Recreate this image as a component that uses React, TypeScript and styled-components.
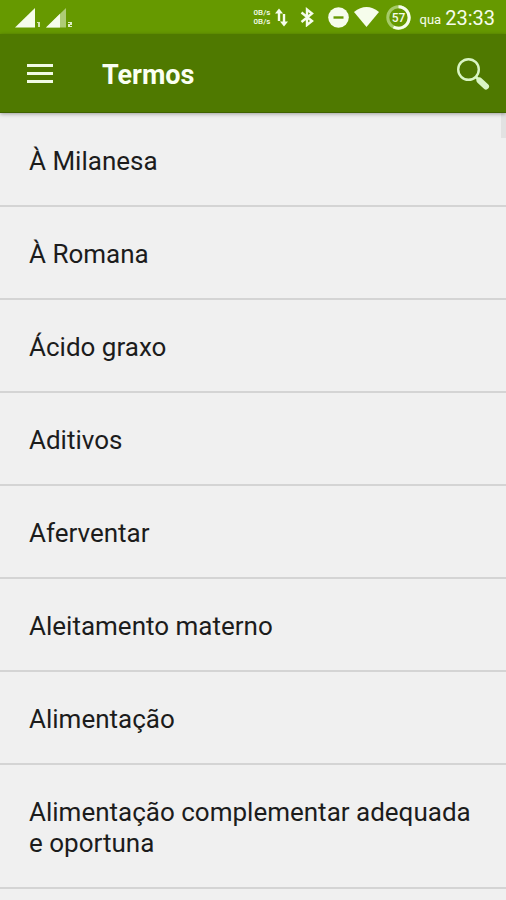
import React from "react";
import styled, { createGlobalStyle } from "styled-components";

const GlobalStyle = createGlobalStyle`
  *, *::before, *::after { box-sizing: border-box; }
  html, body, #root { height: 100%; }
  body {
    margin: 0;
    background: #f0f0f0;
    font-family: Roboto, "Noto Sans", sans-serif;
  }
`;

const Screen = styled.div`
  display: flex;
  flex-direction: column;
  height: 100%;
  overflow: hidden;
`;

const StatusBar = styled.div`
  display: flex;
  align-items: center;
  flex: none;
  height: 34px;
  padding: 0 11px 0 14px;
  background: #669900;
  color: #f6fdec;
`;

const SignalGroup = styled.div`
  display: flex;
  flex: 1;
`;

const StatusIcon = styled.svg<{ $gap?: number }>`
  display: block;
  flex: none;
  margin-right: ${({ $gap = 0 }) => $gap}px;
`;

const Speed = styled.div`
  display: flex;
  flex-direction: column;
  width: 19px;
  margin-right: 2px;
  font-size: 8px;
  line-height: 9px;
  font-weight: 500;
`;

const Weekday = styled.span`
  margin: 6px 4px 0 0;
  font-size: 13px;
  line-height: 20px;
`;

const Clock = styled.time`
  font-size: 20px;
  line-height: 24px;
  margin-top: 2px;
`;

const AppBar = styled.header`
  position: relative;
  display: flex;
  align-items: center;
  flex: none;
  height: 79px;
  padding: 2px 13px 0 20px;
  background: #4f7900;
  border-bottom: 1px solid #3f6200;
  box-shadow: 0 1px 4px rgba(0, 0, 0, 0.35);
  z-index: 1;
`;

const Title = styled.h1`
  flex: 1;
  margin: 2px 0 0 42px;
  color: #fafff2;
  font-size: 27px;
  line-height: 32px;
  font-weight: 700;
`;

const IconButton = styled.button`
  display: flex;
  align-items: center;
  justify-content: center;
  width: 40px;
  height: 48px;
  padding: 0;
  border: 0;
  background: none;
  color: #f1fbe6;
  cursor: pointer;
`;

const ListPane = styled.main`
  position: relative;
  flex: 1;
  min-height: 0;
  overflow: hidden;
`;

const TermList = styled.ul`
  margin: 0;
  padding: 1px 0 0;
  list-style: none;
`;

const TermItem = styled.li`
  border-bottom: 2px solid #d4d4d4;
`;

const TermLink = styled.a`
  display: block;
  padding: 32px 28px 28px 29px;
  color: #1c1c1c;
  font-size: 26px;
  line-height: 31px;
  text-decoration: none;
`;

const ScrollThumb = styled.div`
  position: absolute;
  top: 0;
  right: 0;
  width: 5px;
  height: 25px;
  background: #e2e2e2;
`;

const terms = [
  "À Milanesa",
  "À Romana",
  "Ácido graxo",
  "Aditivos",
  "Aferventar",
  "Aleitamento materno",
  "Alimentação",
  "Alimentação complementar adequada e oportuna",
];

function Signal({ sim, weak }: { sim: 1 | 2; weak?: boolean }) {
  return (
    <StatusIcon $gap={3} width="28" height="22" viewBox="0 0 28 22" fill="currentColor" aria-label={`SIM ${sim}`}>
      <path d="M1 21.5 L21 2 V21.5 Z" opacity={weak ? 0.5 : 1} />
      {weak && <path d="M1 21.5 L15 7.8 V21.5 Z" />}
      {sim === 1 ? <path d="M23 16h3v5h-2v-4h-1z" opacity="0.75" /> : <path d="M23 16h4v3h-2v1h2v1h-4v-3h2v-1h-2z" opacity="0.85" />}
    </StatusIcon>
  );
}

export default function App() {
  return (
    <>
      <GlobalStyle />
      <Screen>
        <StatusBar>
          <SignalGroup>
            <Signal sim={1} />
            <Signal sim={2} weak />
          </SignalGroup>
          <Speed>
            <span>0B/s</span>
            <span>0B/s</span>
          </Speed>
          <StatusIcon $gap={12} width="13" height="20" viewBox="0 0 13 20" fill="none" stroke="currentColor" strokeWidth="2.4">
            <path d="M4 14V4M9 7v10" />
            <path d="M0 6.5l4-5 4 5zM5 14.5l4 5 4-5z" fill="currentColor" stroke="none" />
          </StatusIcon>
          <StatusIcon $gap={13} width="15" height="20" viewBox="0 0 15 20" fill="none" stroke="currentColor" strokeWidth="2.4">
            <path d="M1.5 5.5l10.5 8.5-5 4V2.5l5 4-10.5 8.5" />
          </StatusIcon>
          <StatusIcon $gap={5} width="21" height="21" viewBox="0 0 21 21">
            <circle cx="10.5" cy="10.5" r="10.3" fill="currentColor" />
            <path d="M5.5 10.5h10" stroke="#669900" strokeWidth="2.4" />
          </StatusIcon>
          <StatusIcon $gap={7} width="25" height="20" viewBox="0 0 25 20" fill="currentColor">
            <path d="M0 5Q12.5-5 25 5L12.5 20Z" />
          </StatusIcon>
          <StatusIcon $gap={9} width="25" height="25" viewBox="0 0 25 25" fill="none">
            <circle cx="12.5" cy="12.5" r="10.7" stroke="#a6cb69" strokeWidth="3" />
            <path d="M12.5 1.8a10.7 10.7 0 1 1-5 20.2" stroke="currentColor" strokeWidth="3" />
            <text x="12.5" y="17" textAnchor="middle" fill="currentColor" fontSize="12" fontWeight="500">57</text>
          </StatusIcon>
          <Weekday>qua</Weekday>
          <Clock>23:33</Clock>
        </StatusBar>
        <AppBar>
          <IconButton aria-label="Menu">
            <svg width="28" height="22" viewBox="0 0 28 22" fill="currentColor">
              <path d="M1 1h26v3H1zM1 9h26v3H1zM1 17h26v3H1z" />
            </svg>
          </IconButton>
          <Title>Termos</Title>
          <IconButton aria-label="Buscar">
            <svg width="34" height="34" viewBox="0 0 34 34" fill="none" stroke="#d9f5c3">
              <circle cx="12.5" cy="12.5" r="10.3" strokeWidth="2.4" />
              <path d="M19.5 19.5l4 4" strokeWidth="3" />
              <path d="M23.5 23.5l6.5 6" strokeWidth="6" strokeLinecap="round" />
            </svg>
          </IconButton>
        </AppBar>
        <ListPane>
          <TermList>
            {terms.map((term) => (
              <TermItem key={term}>
                <TermLink href="#">{term}</TermLink>
              </TermItem>
            ))}
          </TermList>
          <ScrollThumb />
        </ListPane>
      </Screen>
    </>
  );
}
